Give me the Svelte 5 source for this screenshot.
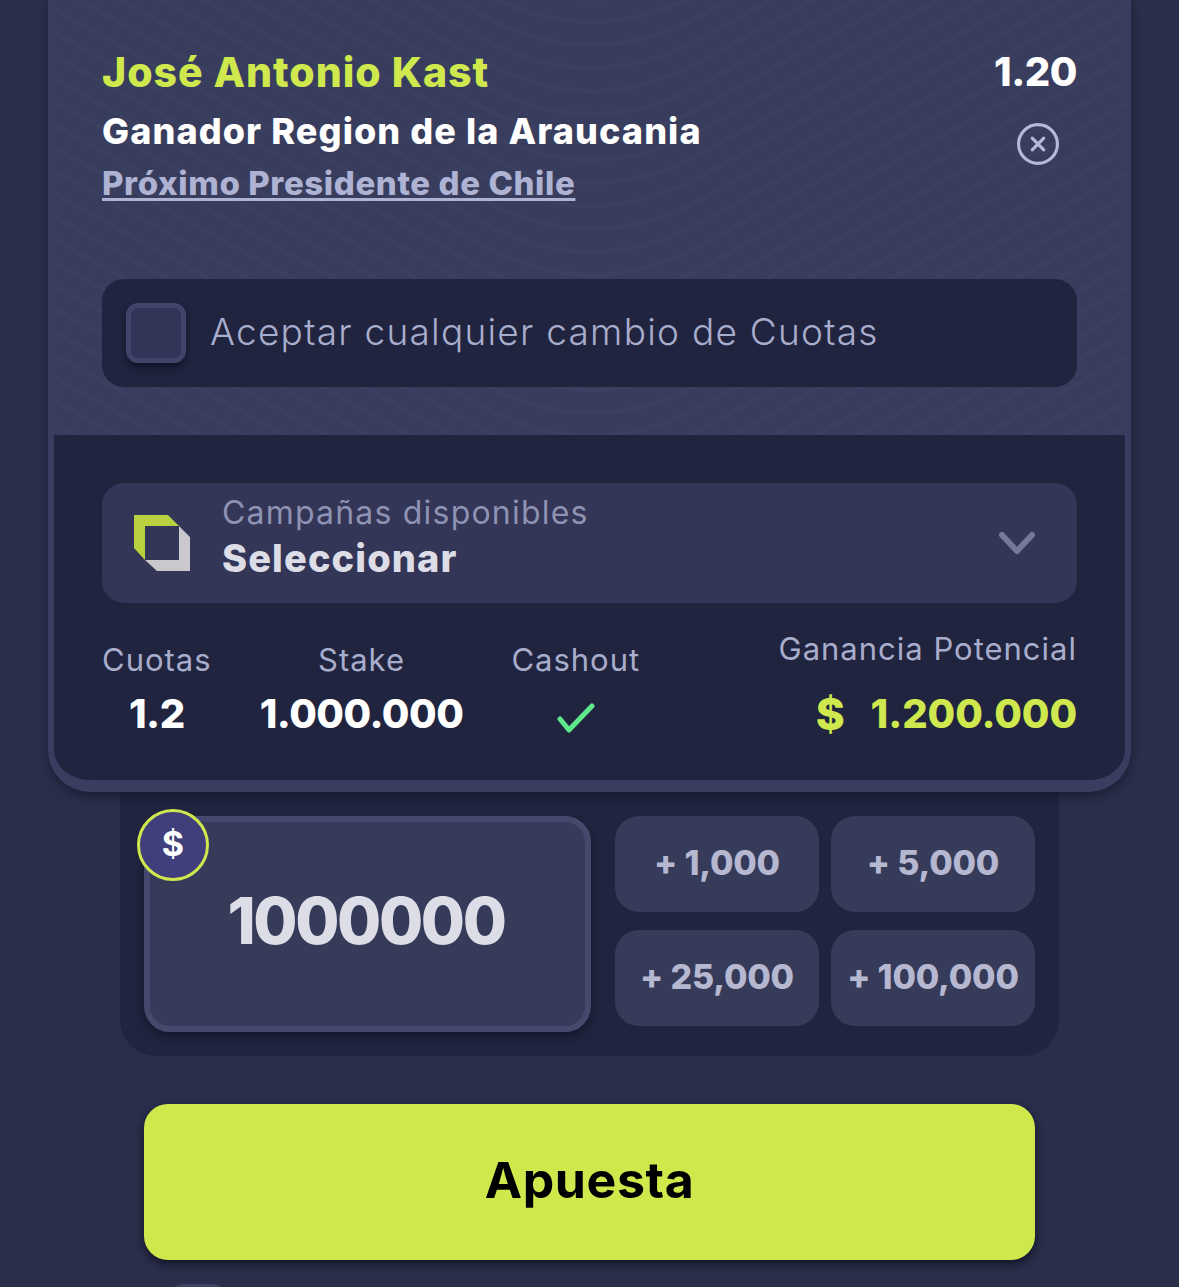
<script>
  const stats = [
    { label: 'Cuotas', value: '1.2' },
    { label: 'Stake', value: '1.000.000' }
  ];
  const amounts = ['1,000', '5,000', '25,000', '100,000'];
  const vees = Array.from({ length: 70 }, (_, i) => -500 + i * 23);
  const cx = 538;
  const bowl = (y) => `M${cx - 1100} ${y - 605}L${cx - 110} ${y - 60}Q${cx} ${y} ${cx + 110} ${y - 60}L${cx + 1100} ${y - 605}`;
</script>

<div class="page">
  <section class="card">
    <div class="top">
      <svg class="waves" viewBox="0 0 1071 435" aria-hidden="true">
        {#each vees as y}
          <path d={bowl(y)} />
        {/each}
      </svg>
      <div class="pick">
        <div class="pick-text">
          <div class="name">José Antonio Kast</div>
          <div class="market">Ganador Region de la Araucania</div>
          <a class="event" href="#top">Próximo Presidente de Chile</a>
        </div>
        <div class="pick-side">
          <div class="odds">1.20</div>
          <svg class="close" viewBox="0 0 40 40" aria-hidden="true">
            <circle cx="20" cy="20" r="18.5" />
            <path d="M14.5 14.5l11 11M25.5 14.5l-11 11" />
          </svg>
        </div>
      </div>
      <label class="accept">
        <span class="check"></span>
        <span class="accept-text">Aceptar cualquier cambio de Cuotas</span>
      </label>
    </div>

    <div class="bottom">
      <div class="select">
        <svg class="logo" viewBox="0 0 56 56" aria-hidden="true">
          <path fill="#b9d13f" d="M0 0h34l11 11H11v34L0 33z" />
          <path fill="#c9c9cd" d="M45 11l11 11v34H23L11 45h34z" />
        </svg>
        <div class="select-text">
          <div class="select-label">Campañas disponibles</div>
          <div class="select-value">Seleccionar</div>
        </div>
        <svg class="chev" viewBox="0 0 36 24" aria-hidden="true"><path d="M3 4l15 16L33 4" /></svg>
      </div>
      <div class="stats">
        {#each stats as s}
          <div class="stat">
            <div class="stat-label">{s.label}</div>
            <div class="stat-value">{s.value}</div>
          </div>
        {/each}
        <div class="stat cash">
          <div class="stat-label">Cashout</div>
          <svg class="tick" viewBox="0 0 38 30" aria-hidden="true"><path d="M3 16l9 11L35 3" /></svg>
        </div>
        <div class="stat win">
          <div class="stat-label">Ganancia Potencial</div>
          <div class="stat-value green"><span class="cur">$</span><span>1.200.000</span></div>
        </div>
      </div>
    </div>
  </section>

  <section class="stake">
    <div class="input">
      <span class="badge">$</span>
      <span class="amount">1000000</span>
    </div>
    <div class="quick">
      {#each amounts as a}
        <button type="button">+ {a}</button>
      {/each}
    </div>
  </section>

  <button type="button" class="bet">Apuesta</button>
  <div class="stub"></div>
</div>

<style>
  :global(body) { margin: 0; background: #2a2e4a; }
  .page {
    width: 1179px; height: 1287px; overflow: hidden; box-sizing: border-box;
    padding: 0 48px; background: #2a2e4a;
    font-family: Inter, "Open Sans", sans-serif;
    display: flex; flex-direction: column;
  }
  .card {
    flex: none; position: relative; z-index: 1;
    border: 6px solid #3a3d5f; border-top: 0; border-bottom-width: 12px;
    border-radius: 0 0 42px 42px;
    box-shadow: 0 5px 8px rgba(15, 17, 35, .5);
    background: #20243f;
    overflow: hidden;
  }
  .top {
    position: relative; height: 435px; box-sizing: border-box;
    padding: 44px 48px 0; background: #383d5d; overflow: hidden;
  }
  .waves { position: absolute; inset: 0; width: 100%; height: 100%; }
  .waves path { fill: none; stroke: #40456a; stroke-width: 4; opacity: .4; }
  .pick { position: relative; display: flex; justify-content: space-between; height: 235px; }
  .name { font-size: 41px; line-height: 56px; font-weight: 800; color: #cfe84e; letter-spacing: .98px; }
  .market { font-size: 36px; line-height: 62px; font-weight: 800; color: #fff; letter-spacing: 1.09px; }
  .event {
    display: inline-block; font-size: 33px; line-height: 42px; font-weight: 800; color: #aeb2d3;
    text-decoration: underline; text-decoration-thickness: 3px; text-underline-offset: 3px; letter-spacing: .6px;
  }
  .pick-side { display: flex; flex-direction: column; align-items: flex-end; }
  .odds { font-size: 40px; line-height: 56px; font-weight: 800; color: #fff; letter-spacing: -.5px; }
  .close { width: 42px; height: 42px; margin: 23px 18px 0 0; fill: none; stroke: #b7bad6; stroke-width: 3; stroke-linecap: round; }
  .accept {
    position: relative; height: 108px; box-sizing: border-box; padding: 0 24px;
    display: flex; align-items: center; gap: 24px; background: #20243f; border-radius: 22px;
    font-size: 37px; font-weight: 300; color: #a9adcc; letter-spacing: 1.25px;
  }
  .accept-text { margin-bottom: 3px; }
  .check {
    width: 60px; height: 60px; box-sizing: border-box; border: 5px solid #404468;
    border-radius: 12px; background: #323557; box-shadow: 0 5px 6px rgba(10, 12, 28, .6);
  }
  .bottom { padding: 48px 48px 0; height: 345px; box-sizing: border-box; }
  .select {
    height: 120px; box-sizing: border-box; padding: 0 42px 0 32px;
    display: flex; align-items: center; background: #333656; border-radius: 22px;
  }
  .logo { width: 56px; height: 56px; flex: none; margin-right: 32px; }
  .select-text { flex: 1; }
  .select-label { font-size: 32px; line-height: 44px; margin-top: -14px; color: #8e92b3; letter-spacing: 1.2px; }
  .select-value { font-size: 38px; line-height: 46px; font-weight: 800; color: #dcdde6; letter-spacing: 1.1px; }
  .chev { width: 36px; height: 24px; fill: none; stroke: #74789b; stroke-width: 6; stroke-linecap: round; stroke-linejoin: round; }
  .stats { display: flex; margin-top: 35px; }
  .stat { display: flex; flex-direction: column; align-items: center; margin-right: 48px; }
  .stat-label { font-size: 31px; line-height: 44px; color: #a9adcc; letter-spacing: 1px; }
  .stat-value { font-size: 40px; line-height: 56px; margin-top: 4px; font-weight: 800; color: #fff; letter-spacing: -.5px; }
  .cash .tick { width: 38px; height: 30px; margin-top: 21px; fill: none; stroke: #5fe88c; stroke-width: 5; stroke-linecap: round; stroke-linejoin: round; }
  .win { margin: -11px 0 0 auto; align-items: flex-end; }
  .win .stat-value { margin-top: 15px; }
  .green { color: #cfe84e; display: flex; align-items: center; gap: 26px; letter-spacing: -.1px; }
  .cur { font-size: 44px; }
  .stake {
    flex: none; margin: 0 72px; padding: 24px; height: 264px; box-sizing: border-box;
    display: flex; gap: 24px; background: #20243f; border-radius: 0 0 36px 36px;
  }
  .input {
    position: relative; width: 447px; height: 216px; box-sizing: border-box; flex: none;
    display: flex; align-items: center; justify-content: center; padding-bottom: 8px;
    background: #373b5a; border: 6px solid #45496e; border-radius: 26px;
    box-shadow: 0 5px 8px rgba(10, 12, 28, .5);
  }
  .amount { font-size: 64px; font-weight: 800; color: #dcdde6; letter-spacing: -2.4px; margin-right: 3px; }
  .badge {
    position: absolute; left: -13px; top: -13px; width: 72px; height: 72px; box-sizing: border-box;
    display: flex; align-items: center; justify-content: center; padding-bottom: 4px;
    border-radius: 50%; border: 3px solid #cfe84e; background: #403f7c;
    color: #fff; font-size: 34px; font-weight: 700;
  }
  .quick { display: grid; grid-template-columns: 204px 204px; grid-auto-rows: 96px; column-gap: 12px; row-gap: 18px; }
  .quick button {
    border: 0; border-radius: 24px; background: #373b5a; color: #b5b8d0;
    font: 800 34px Inter, sans-serif; letter-spacing: -.2px; padding: 0 0 3px;
  }
  .bet {
    flex: none; margin: 48px 96px 0; width: 891px; height: 156px; border: 0; border-radius: 24px;
    background: #cfe94d; color: #000; font: 700 50px Inter, sans-serif; letter-spacing: .6px; padding: 0 0 4px;
    box-shadow: 0 4px 8px rgba(10, 12, 25, .75);
  }
  .stub { flex: none; width: 52px; height: 10px; margin: 24px 0 0 124px; background: #3f4163; border-radius: 10px 10px 0 0; }
</style>
